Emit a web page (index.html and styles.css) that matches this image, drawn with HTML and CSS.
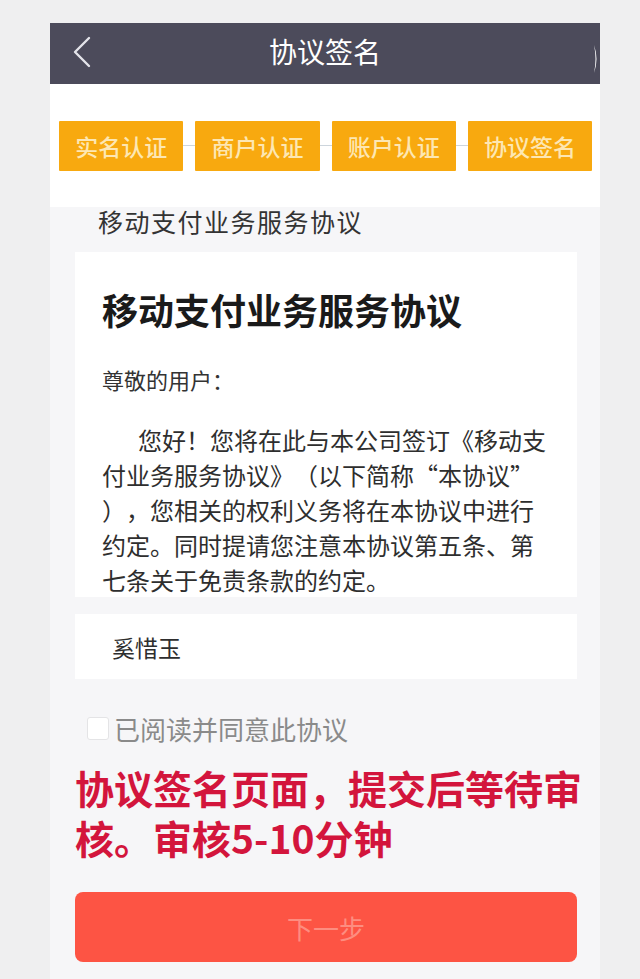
FILE: index.html
```html
<!DOCTYPE html>
<html lang="zh-CN">
<head>
<meta charset="utf-8">
<title>协议签名</title>
<link rel="stylesheet" href="styles.css">
</head>
<body>
<div class="phone">
  <header class="topbar">
    <svg class="back" width="20" height="32" viewBox="0 0 20 32"><path d="M17 2 L3 16 L17 30" fill="none" stroke="#e4e4ea" stroke-width="2.4" stroke-linecap="round" stroke-linejoin="round"/></svg>
    <h1 class="title">协议签名</h1>
    <svg class="edge" width="6" height="28" viewBox="0 0 6 28"><path d="M0 0 Q5 14 0 28 Q3 14 0 0 Z" fill="#ffffff"/></svg>
  </header>
  <section class="steps">
    <div class="step-row">
      <div class="step">实名认证</div>
      <div class="step">商户认证</div>
      <div class="step">账户认证</div>
      <div class="step">协议签名</div>
    </div>
  </section>
  <div class="subtitle">移动支付业务服务协议</div>
  <article class="card">
    <h2 class="doc-title">移动支付业务服务协议</h2>
    <p class="greet">尊敬的用户：</p>
    <p class="para">您好！您将在此与本公司签订《移动支付业务服务协议》（以下简称“本协议”），您相关的权利义务将在本协议中进行约定。同时提请您注意本协议第五条、第七条关于免责条款的约定。</p>
  </article>
  <div class="name-field">奚惜玉</div>
  <label class="agree"><span class="box"></span>已阅读并同意此协议</label>
  <p class="note">协议签名页面，提交后等待审核。审核5-10分钟</p>
  <div class="next">下一步</div>
</div>
</body>
</html>
```
FILE: styles.css
```css
html, body {
  margin: 0;
  padding: 0;
  background: #efeff0;
}
body {
  font-family: "Noto Sans CJK SC", "Noto Sans", sans-serif;
  padding-top: 23px;
  text-spacing-trim: space-all;
}
.phone {
  margin-left: 50px;
  width: 550px;
  min-height: 956px;
  background: #f6f6f8;
  display: flex;
  flex-direction: column;
}
.topbar {
  position: relative;
  height: 61px;
  background: #4c4b5b;
  display: flex;
  align-items: center;
  justify-content: center;
}
.back {
  position: absolute;
  left: 22px;
  top: 13px;
}
.edge {
  position: absolute;
  right: 0;
  top: 22px;
}
.title {
  margin: 0 0 6px;
  color: #ffffff;
  font-size: 28px;
  font-weight: 400;
  line-height: 36px;
}
.steps {
  background: #ffffff;
  height: 123px;
  padding: 37px 8px 0 9px;
  box-sizing: border-box;
}
.step-row {
  display: flex;
  gap: 12px;
  height: 50px;
  background: linear-gradient(to bottom, transparent 24px, #cdd5dc 24px, #cdd5dc 25px, transparent 25px);
}
.step {
  flex: 1;
  background: #f8a90f;
  color: #fde7b3;
  font-size: 23px;
  font-weight: 500;
  display: flex;
  align-items: center;
  justify-content: center;
  border-radius: 1px;
}
.subtitle {
  height: 28px;
  line-height: 28px;
  padding-left: 48px;
  font-size: 25px;
  letter-spacing: 1.5px;
  color: #333333;
}
.card {
  margin: 17px 23px 0 25px;
  height: 345px;
  box-sizing: border-box;
  padding: 34px 24px 0 27px;
  background: #ffffff;
  overflow: hidden;
}
.doc-title {
  margin: 0;
  font-size: 36px;
  line-height: 46px;
  font-weight: 700;
  color: #1a1a1a;
}
.greet {
  margin: 30px 0 0;
  font-size: 22px;
  line-height: 35px;
  color: #333333;
}
.para {
  margin: 25px 0 0;
  font-size: 24px;
  line-height: 35px;
  color: #2e2e2e;
  text-indent: 36px;
  line-break: anywhere;
  width: 448px;
}
.name-field {
  margin: 17px 23px 0 25px;
  height: 65px;
  background: #ffffff;
  display: flex;
  align-items: center;
  padding-left: 37px;
  font-size: 23px;
  color: #2e2e2e;
}
.agree {
  margin: 34px 0 0 37px;
  height: 30px;
  display: flex;
  align-items: center;
  gap: 5px;
  font-size: 26px;
  color: #8a8a8a;
}
.box {
  width: 20px;
  height: 21px;
  background: #ffffff;
  border: 1px solid #e4e4e6;
  border-radius: 3px;
}
.note {
  margin: 19px 10px 0 25px;
  font-size: 39px;
  line-height: 50px;
  font-weight: 700;
  color: #d3153c;
}
.next {
  margin: 30px 23px 0 25px;
  height: 70px;
  border-radius: 8px;
  background: #fd5444;
  color: #fd8d80;
  font-size: 26px;
  display: flex;
  align-items: center;
  justify-content: center;
}
```
